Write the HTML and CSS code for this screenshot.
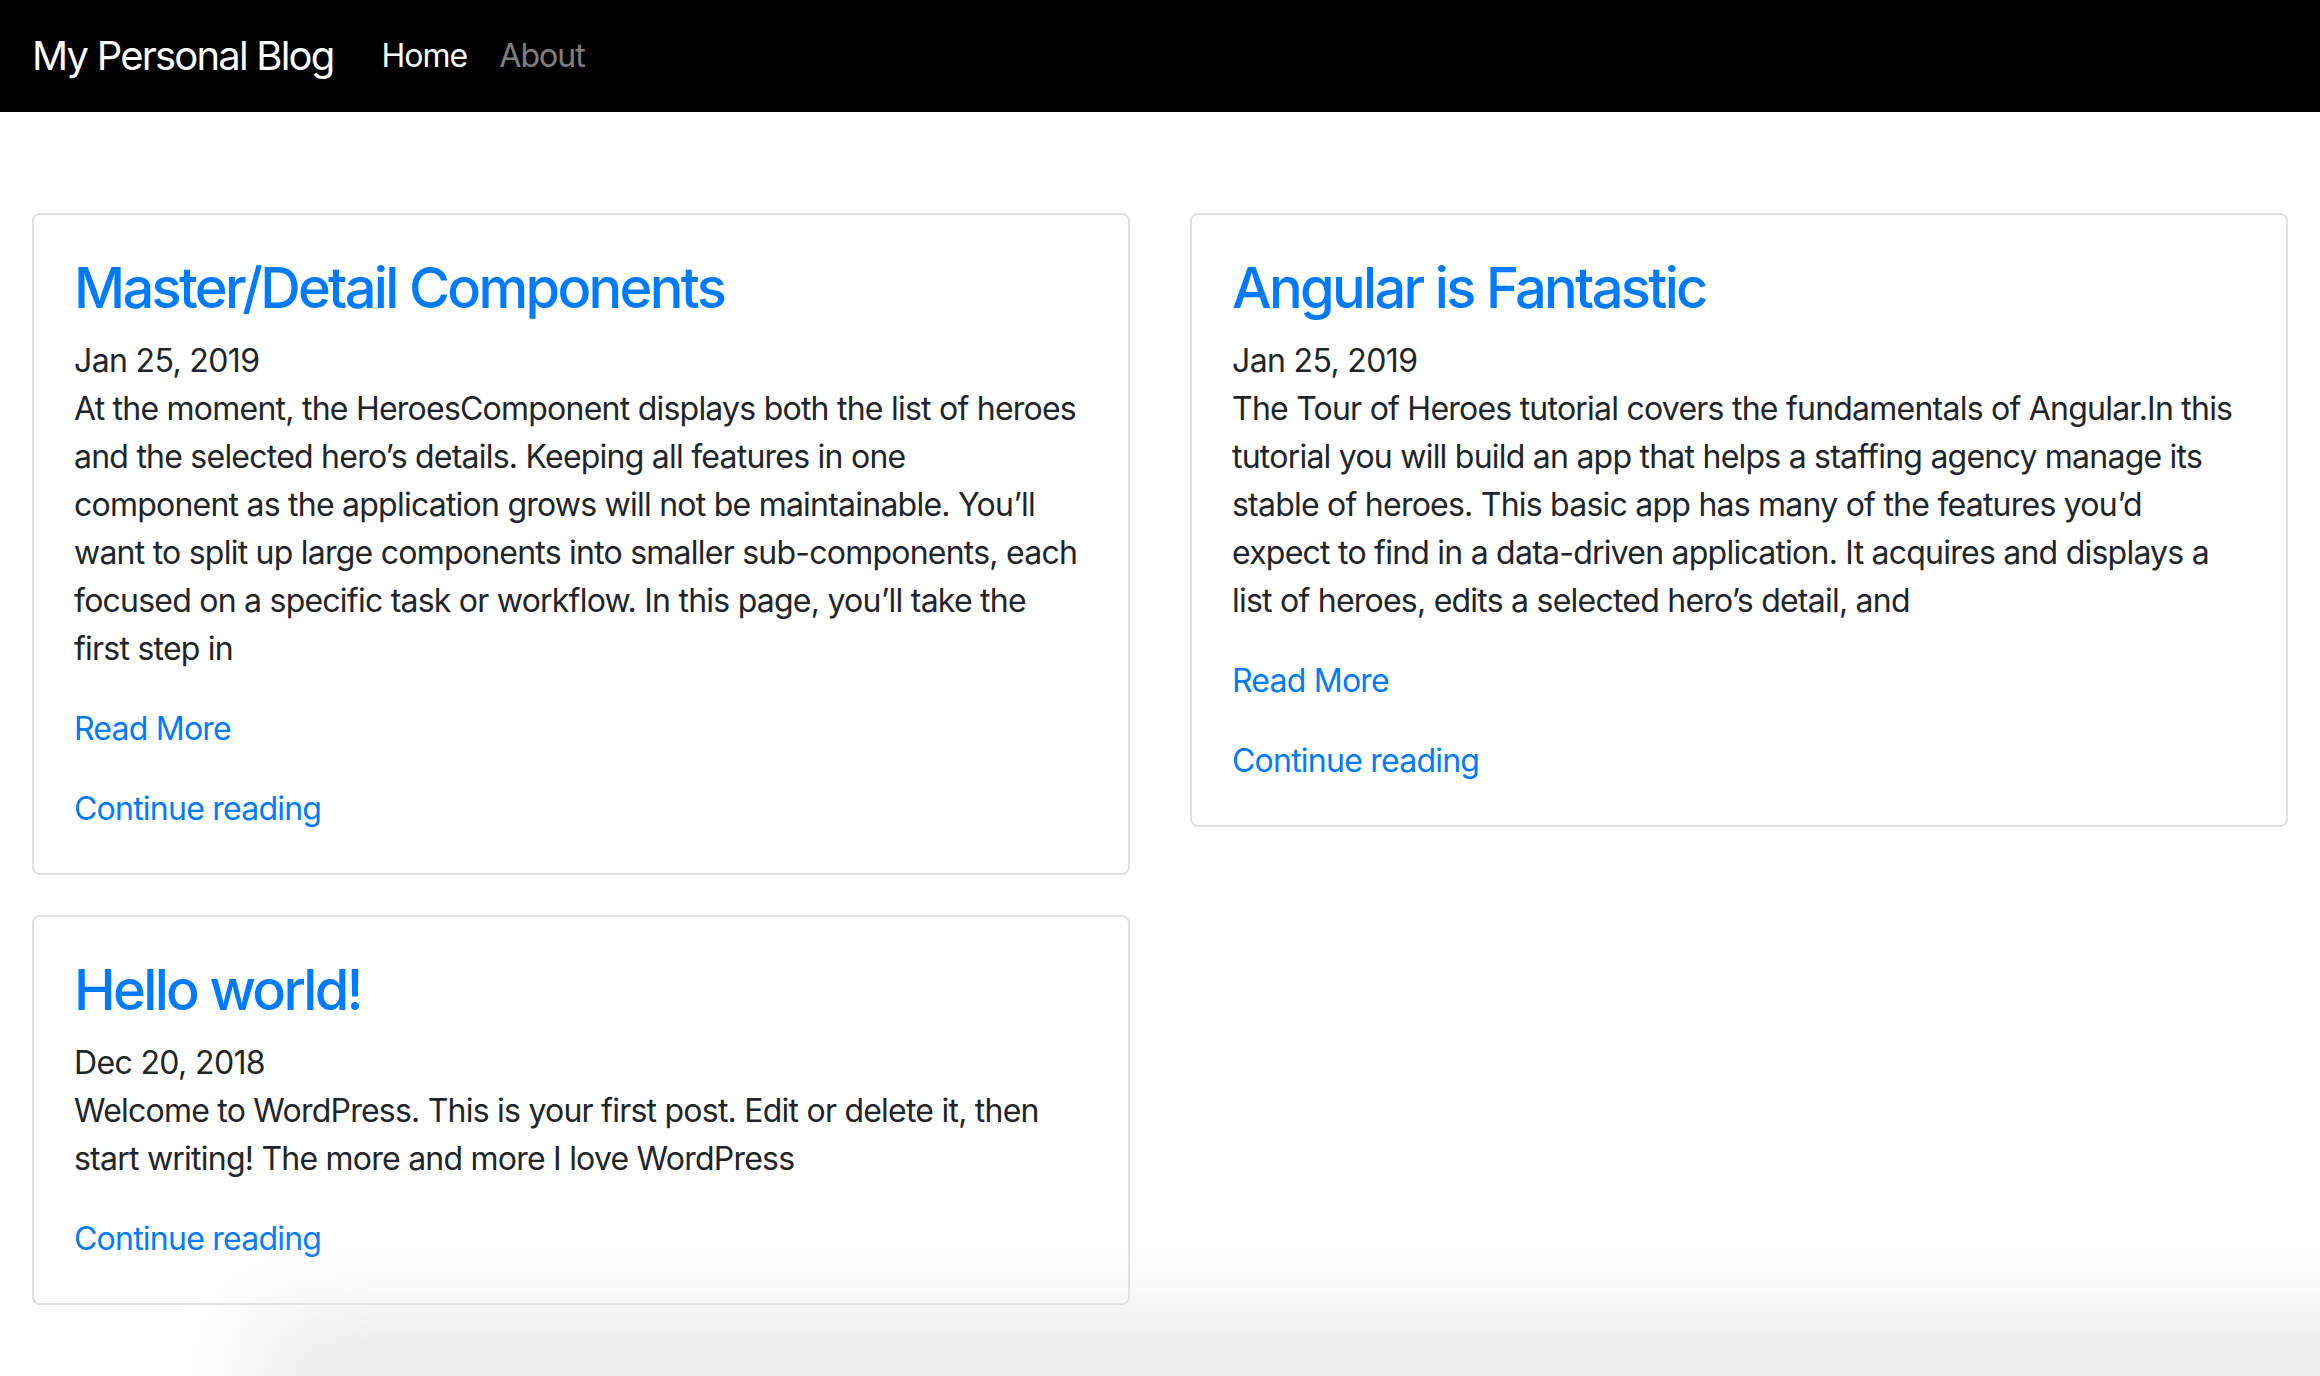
FILE: index.html
```html
<!DOCTYPE html>
<html lang="en">
<head>
<meta charset="utf-8">
<title>My Personal Blog</title>
<link rel="stylesheet" href="styles.css">
</head>
<body>
<nav class="navbar">
  <a class="brand" href="#">My Personal Blog</a>
  <a class="nav-link active" href="#">Home</a>
  <a class="nav-link" href="#">About</a>
</nav>
<main class="posts">
  <article class="card">
    <h3 class="card-title"><a href="#">Master/Detail Components</a></h3>
    <div class="date">Jan 25, 2019</div>
    <p class="excerpt">At the moment, the HeroesComponent displays both the list of heroes and the selected hero’s details. Keeping all features in one<br>component as the application grows will not be maintainable. You’ll want to split up large components into smaller sub-components, each focused on a specific task or workflow. In this page, you’ll take the first step in</p>
    <p class="more"><a href="#">Read More</a></p>
    <a class="continue" href="#">Continue reading</a>
  </article>
  <article class="card">
    <h3 class="card-title"><a href="#">Angular is Fantastic</a></h3>
    <div class="date">Jan 25, 2019</div>
    <p class="excerpt">The Tour of Heroes tutorial covers the fundamentals of Angular.In this tutorial you will build an app that helps a staffing agency manage its stable of heroes. This basic app has many of the features you’d expect to find in a data-driven application. It acquires and displays a list of heroes, edits a selected hero’s detail, and</p>
    <p class="more"><a href="#">Read More</a></p>
    <a class="continue" href="#">Continue reading</a>
  </article>
  <article class="card">
    <h3 class="card-title"><a href="#">Hello world!</a></h3>
    <div class="date">Dec 20, 2018</div>
    <p class="excerpt">Welcome to WordPress. This is your first post. Edit or delete it, then start writing! The more and more I love WordPress</p>
    <a class="continue" href="#">Continue reading</a>
  </article>
</main>
<div class="shade"></div>
</body>
</html>
```
FILE: styles.css
```css
* { box-sizing: border-box; }
html, body { margin: 0; padding: 0; background: #fff; }
body {
  font-family: Inter, "Noto Sans", "Liberation Sans", sans-serif;
  font-size: 32px;
  line-height: 48px;
  letter-spacing: -0.024em;
  color: #212529;
  overflow: hidden;
  height: 1376px;
}
a { color: #007bff; text-decoration: none; }

.navbar {
  display: flex;
  align-items: center;
  height: 112px;
  padding: 16px 32px;
  background: #000;
}
.brand {
  color: #fff;
  font-size: 40px;
  line-height: 60px;
  letter-spacing: -0.045em;
  padding: 10px 0;
  margin-right: 32px;
}
.nav-link {
  color: rgba(255,255,255,.5);
  padding: 16px 16px;
  line-height: 48px;
  letter-spacing: -0.03em;
}
.nav-link.active { color: #fff; }

.posts {
  display: grid;
  grid-template-columns: 1fr 1fr;
  column-gap: 60px;
  row-gap: 40px;
  align-items: start;
  padding: 101px 32px 0;
}
.card {
  border: 2px solid #dfdfdf;
  border-radius: 8px;
  padding: 40px;
  background: #fff;
}
.card-title {
  margin: 0 0 16px;
  font-size: 56px;
  font-weight: 500;
  line-height: 66px;
  letter-spacing: -0.048em;
}
.date { line-height: 48px; letter-spacing: -0.02em; }
.excerpt { margin: 0 0 32px; }
.more { margin: 0 0 32px; }
.continue { display: inline-block; }

.shade {
  position: fixed;
  left: 260px;
  right: -200px;
  bottom: -70px;
  height: 130px;
  background: #e9e9e9;
  filter: blur(45px);
  pointer-events: none;
}
```
